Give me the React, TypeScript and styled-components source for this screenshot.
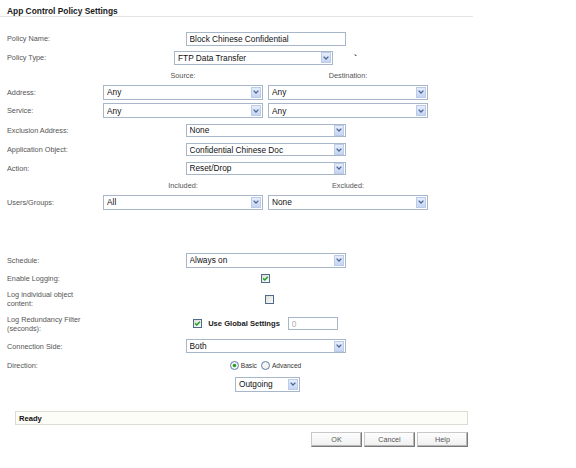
import React from "react";
import styled, { createGlobalStyle } from "styled-components";

const Global = createGlobalStyle`
  html, body { margin: 0; padding: 0; background: #fff; }
  * { box-sizing: border-box; }
`;

const Page = styled.div`
  width: 576px;
  height: 468px;
  overflow: hidden;
  background: #fff;
  font-family: "Liberation Sans", Arial, sans-serif;
  color: #4a4a4a;
`;

const Title = styled.div`
  width: 473px;
  height: 17px;
  padding: 7px 0 0 7px;
  line-height: 9px;
  font-size: 8.4px;
  font-weight: bold;
  color: #1a1a1a;
  border-bottom: 1px solid #e4e4e4;
`;

const Form = styled.div`
  display: flex;
  flex-direction: column;
  padding: 12px 0 0 7px;
`;

const Row = styled.div<{ $h: number }>`
  display: grid;
  grid-template-columns: 96px 325px;
  align-items: center;
  height: ${(p) => p.$h}px;
`;

const Label = styled.div`
  font-size: 7.3px;
  line-height: 9px;
  color: #555;
`;

const Value = styled.div<{ $shift?: number }>`
  display: flex;
  justify-content: center;
  align-items: center;
  padding-left: ${(p) => (p.$shift ?? 0) * 2}px;
`;

const Pair = styled.div`
  display: grid;
  grid-template-columns: 160px 160px;
  column-gap: 5px;
  align-items: center;
`;

const ColHead = styled.div`
  text-align: center;
  font-size: 7.3px;
  color: #555;
`;

const Spacer = styled.div<{ $h: number }>`
  height: ${(p) => p.$h}px;
`;

const Box = styled.div<{ $w: number; $h?: number }>`
  width: ${(p) => p.$w}px;
  height: ${(p) => p.$h ?? 15}px;
  border: 1px solid #a7b6c8;
  background: #fff;
  display: flex;
  align-items: center;
  padding: 0 1px 0 3px;
  font-size: 8.3px;
  color: #111;
`;

const BoxText = styled.span<{ $muted?: boolean }>`
  flex: 1;
  white-space: nowrap;
  overflow: hidden;
  color: ${(p) => (p.$muted ? "#b0b0b0" : "#111")};
`;

const Arrow = styled.span`
  width: 10px;
  height: 11px;
  display: flex;
  align-items: center;
  justify-content: center;
  background: linear-gradient(#e6edfb, #c6d5f4);
  border: 1px solid #bccbe8;
`;

const Tick = styled.span`
  margin-left: 21px;
  margin-top: 0px;
  font-size: 9px;
  font-weight: bold;
  color: #111;
  line-height: 6px;
`;

const Group = styled.div`
  display: flex;
  align-items: center;
`;

const BoldLabel = styled.span`
  font-size: 7.6px;
  font-weight: bold;
  color: #1a1a1a;
  margin: 0 8px 0 6px;
`;

const Small = styled.span`
  font-size: 6.6px;
  color: #333;
  margin: 0 4px 0 2px;
`;

const StatusBar = styled.div`
  margin: 19px 0 0 15px;
  width: 453px;
  height: 14px;
  border: 1px solid #dcdcd6;
  background: #fdfdf8;
  padding-left: 3px;
  display: flex;
  align-items: center;
  font-size: 7.6px;
  font-weight: bold;
  color: #111;
`;

const Buttons = styled.div`
  display: flex;
  justify-content: flex-end;
  gap: 2px;
  width: 468px;
  margin-top: 7px;
`;

const Button = styled.div`
  width: 51px;
  height: 15px;
  display: flex;
  align-items: center;
  justify-content: center;
  font-size: 7.2px;
  color: #555;
  background: linear-gradient(#fdfdfd, #f0f0f0);
  border: 1px solid;
  border-color: #c9c9c9 #7a7a7a #7a7a7a #c9c9c9;
  box-shadow: inset -1px -1px 0 #b8b8b8;
`;

const Chevron = () => (
  <svg width="6" height="4" viewBox="0 0 6 4">
    <path d="M0.6 0.6 L3 3 L5.4 0.6" fill="none" stroke="#4b6794" strokeWidth="1.3" />
  </svg>
);

const Select = ({ w, text, h }: { w: number; text: string; h?: number }) => (
  <Box $w={w} $h={h}>
    <BoxText>{text}</BoxText>
    <Arrow>
      <Chevron />
    </Arrow>
  </Box>
);

const Input = ({ w, text, h, muted }: { w: number; text: string; h?: number; muted?: boolean }) => (
  <Box $w={w} $h={h}>
    <BoxText $muted={muted}>{text}</BoxText>
  </Box>
);

const Check = ({ checked }: { checked?: boolean }) => (
  <svg width="9" height="9" viewBox="0 0 9 9">
    <defs>
      <linearGradient id="cbg" x1="0" y1="0" x2="1" y2="1">
        <stop offset="0" stopColor="#dcdcd6" />
        <stop offset="1" stopColor="#fbfbf9" />
      </linearGradient>
    </defs>
    <rect x="0.5" y="0.5" width="8" height="8" fill="url(#cbg)" stroke="#4e6b8d" />
    {checked && (
      <path d="M2.2 4.4 L3.8 6 L6.9 2.7" fill="none" stroke="#21a121" strokeWidth="1.5" />
    )}
  </svg>
);

const Radio = ({ on }: { on?: boolean }) => (
  <svg width="9" height="9" viewBox="0 0 9 9">
    <circle cx="4.5" cy="4.5" r="4" fill="#f4f4f2" stroke="#5c7ea6" />
    {on && <circle cx="4.5" cy="4.5" r="1.8" fill="#27a127" />}
  </svg>
);

export default function App() {
  return (
    <Page>
      <Global />
      <Title>App Control Policy Settings</Title>
      <Form>
        <Row $h={19}>
          <Label>Policy Name:</Label>
          <Value>
            <Input w={160} h={14} text="Block Chinese Confidential" />
          </Value>
        </Row>
        <Row $h={19}>
          <Label>Policy Type:</Label>
          <Value>
            <Group>
              <Select w={159} h={14} text="FTP Data Transfer" />
              <Tick>`</Tick>
            </Group>
          </Value>
        </Row>
        <Row $h={16}>
          <Label />
          <Pair>
            <ColHead>Source:</ColHead>
            <ColHead>Destination:</ColHead>
          </Pair>
        </Row>
        <Row $h={18}>
          <Label>Address:</Label>
          <Pair>
            <Select w={160} text="Any" />
            <Select w={160} text="Any" />
          </Pair>
        </Row>
        <Row $h={19}>
          <Label>Service:</Label>
          <Pair>
            <Select w={160} text="Any" />
            <Select w={160} text="Any" />
          </Pair>
        </Row>
        <Row $h={20}>
          <Label>Exclusion Address:</Label>
          <Value>
            <Select w={160} h={13} text="None" />
          </Value>
        </Row>
        <Row $h={19}>
          <Label>Application Object:</Label>
          <Value>
            <Select w={160} h={13} text="Confidential Chinese Doc" />
          </Value>
        </Row>
        <Row $h={18}>
          <Label>Action:</Label>
          <Value>
            <Select w={160} h={13} text="Reset/Drop" />
          </Value>
        </Row>
        <Row $h={16}>
          <Label />
          <Pair>
            <ColHead>Included:</ColHead>
            <ColHead>Excluded:</ColHead>
          </Pair>
        </Row>
        <Row $h={18}>
          <Label>Users/Groups:</Label>
          <Pair>
            <Select w={160} text="All" />
            <Select w={160} text="None" />
          </Pair>
        </Row>
        <Spacer $h={40} />
        <Row $h={18}>
          <Label>Schedule:</Label>
          <Value>
            <Select w={160} text="Always on" />
          </Value>
        </Row>
        <Row $h={19}>
          <Label>Enable Logging:</Label>
          <Value>
            <Check checked />
          </Value>
        </Row>
        <Row $h={22}>
          <Label>
            Log individual object
            <br />
            content:
          </Label>
          <Value $shift={4}>
            <Check />
          </Value>
        </Row>
        <Row $h={27}>
          <Label>
            Log Redundancy Filter
            <br />
            (seconds):
          </Label>
          <Value>
            <Group>
              <Check checked />
              <BoldLabel>Use Global Settings</BoldLabel>
              <Input w={50} h={13} text="0" muted />
            </Group>
          </Value>
        </Row>
        <Row $h={18}>
          <Label>Connection Side:</Label>
          <Value>
            <Select w={160} h={14} text="Both" />
          </Value>
        </Row>
        <Row $h={21}>
          <Label>Direction:</Label>
          <Value $shift={2}>
            <Group>
              <Radio on />
              <Small>Basic</Small>
              <Radio />
              <Small>Advanced</Small>
            </Group>
          </Value>
        </Row>
        <Row $h={16}>
          <Label />
          <Value $shift={2}>
            <Select w={65} text="Outgoing" />
          </Value>
        </Row>
      </Form>
      <StatusBar>Ready</StatusBar>
      <Buttons>
        <Button>OK</Button>
        <Button>Cancel</Button>
        <Button>Help</Button>
      </Buttons>
    </Page>
  );
}
